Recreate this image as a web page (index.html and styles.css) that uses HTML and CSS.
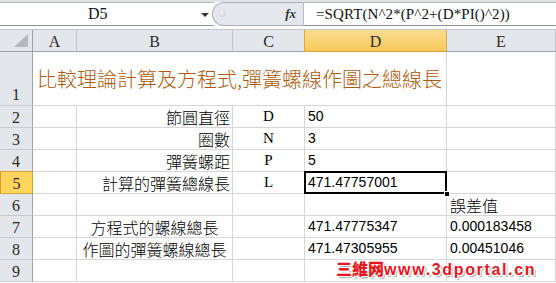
FILE: index.html
```html
<!DOCTYPE html>
<html lang="zh-Hant">
<head>
<meta charset="utf-8">
<title>Sheet</title>
<link rel="stylesheet" href="styles.css">
</head>
<body>
<div class="app">
  <div class="fbar">
    <div class="namebox"><span class="ref">D5</span><span class="caret"></span></div>
    <div class="fxzone"><span class="knob"></span><span class="fx">fx</span></div>
    <div class="formula">=SQRT(N^2*(P^2+(D*PI()^2))</div>
  </div>
  <div class="sheet">
    <div class="corner"><span class="tri"></span></div>
    <div class="ch">A</div>
    <div class="ch">B</div>
    <div class="ch">C</div>
    <div class="ch ch-on">D</div>
    <div class="ch">E</div>

    <div class="rh rh-tall">1</div>
    <div class="c title">比較理論計算及方程式,彈簧螺線作圖之總線長</div>
    <div class="c"></div>

    <div class="rh">2</div>
    <div class="c"></div>
    <div class="c right cjk">節圓直徑</div>
    <div class="c mid ser">D</div>
    <div class="c num">50</div>
    <div class="c"></div>

    <div class="rh">3</div>
    <div class="c"></div>
    <div class="c right cjk">圈數</div>
    <div class="c mid ser">N</div>
    <div class="c num">3</div>
    <div class="c"></div>

    <div class="rh">4</div>
    <div class="c"></div>
    <div class="c right cjk">彈簧螺距</div>
    <div class="c mid ser">P</div>
    <div class="c num">5</div>
    <div class="c"></div>

    <div class="rh rh-on">5</div>
    <div class="c"></div>
    <div class="c right cjk">計算的彈簧總線長</div>
    <div class="c mid ser">L</div>
    <div class="c num sel">471.47757001<span class="handle"></span></div>
    <div class="c"></div>

    <div class="rh">6</div>
    <div class="c"></div>
    <div class="c"></div>
    <div class="c"></div>
    <div class="c"></div>
    <div class="c cjk">誤差值</div>

    <div class="rh">7</div>
    <div class="c"></div>
    <div class="c center cjk">方程式的螺線總長</div>
    <div class="c"></div>
    <div class="c num">471.47775347</div>
    <div class="c num">0.000183458</div>

    <div class="rh">8</div>
    <div class="c"></div>
    <div class="c center cjk">作圖的彈簧螺線總長</div>
    <div class="c"></div>
    <div class="c num">471.47305955</div>
    <div class="c num">0.00451046</div>

    <div class="rh">9</div>
    <div class="c"></div>
    <div class="c"></div>
    <div class="c"></div>
    <div class="c"></div>
    <div class="c"></div>
  </div>
  <div class="wm"><span class="wm-cjk">三維网</span>www.3dportal.cn</div>
</div>
</body>
</html>
```

FILE: styles.css
```css
* { box-sizing: border-box; }
html, body { margin: 0; padding: 0; background: #ffffff; }
body { font-family: "Liberation Sans", "Noto Sans CJK TC", sans-serif; color: #000; }

.app { position: relative; width: 556px; height: 283px; overflow: hidden; background: #fff; }

/* formula bar */
.fbar {
  height: 30px;
  display: flex;
  align-items: flex-start;
  padding-top: 2px;
  background: linear-gradient(#dfe3e8 0, #dfe3e8 2px, #ffffff 2px);
  border-bottom: 1px solid #c4c8ce;
}
.namebox {
  width: 214px;
  height: 24px;
  background: #fff;
  border-top: 1px solid #b7bcc3;
  border-bottom: 1px solid #8e949b;
  display: flex;
  align-items: center;
  position: relative;
}
.ref {
  font-family: "Liberation Serif", serif;
  font-size: 16px;
  margin-left: 88px;
  color: #111;
}
.caret {
  position: absolute;
  left: 201px;
  top: 10px;
  width: 0; height: 0;
  border-left: 4px solid transparent;
  border-right: 4px solid transparent;
  border-top: 4px solid #333;
}
.fxzone {
  width: 92px;
  height: 24px;
  margin-left: -2px;
  background: #e4e7ec;
  border: 1px solid #a9afb7;
  border-right: 1px solid #b6bcc4;
  border-radius: 12px 0 0 12px;
  display: flex;
  align-items: center;
  position: relative;
}
.knob {
  position: absolute;
  left: 6px; top: 7px;
  width: 7px; height: 7px;
  border-radius: 50%;
  background: radial-gradient(circle at 40% 40%, #f4f5f7, #c3c7cd);
}
.fx {
  margin-left: auto;
  margin-right: 7px;
  font-family: "Liberation Serif", serif;
  font-style: italic;
  font-weight: bold;
  font-size: 13px;
  color: #333;
}
.formula {
  flex: 1;
  height: 24px;
  background: #fff;
  border-top: 1px solid #b7bcc3;
  border-bottom: 1px solid #8e949b;
  font-family: "Liberation Serif", serif;
  font-size: 15px;
  letter-spacing: 0.1px;
  padding-left: 12px;
  display: flex;
  align-items: center;
  color: #111;
}

/* sheet */
.sheet {
  display: grid;
  grid-template-columns: 33px 44px 156px 72px 142px 109px;
  grid-template-rows: 22px 54px repeat(8, 22px);
}
.corner, .ch, .rh {
  background: #e3e6eb;
  font-family: "Liberation Serif", serif;
  font-size: 16px;
  color: #2a2a2a;
  display: flex;
  align-items: center;
  justify-content: center;
}
.corner { border-right: 1px solid #9ea4ab; border-bottom: 1px solid #9ea4ab; position: relative; }
.tri {
  position: absolute;
  right: 4px; bottom: 4px;
  width: 14px; height: 13px;
  background: #b5b9bf;
  clip-path: polygon(100% 0, 100% 100%, 0 100%);
}
.ch { border-right: 1px solid #c2c6cc; border-bottom: 1px solid #9ea4ab; padding-top: 2px; }
.ch-on {
  background: linear-gradient(#fbdc8f, #f6c95c);
  border-right: 1px solid #e0a93f;
  border-left: 1px solid #e0a93f;
  border-bottom: 1px solid #e2a23a;
  margin-left: -1px;
}
.rh { border-right: 1px solid #9ea4ab; border-bottom: 1px solid #c8ccd2; padding-top: 3px; }
.rh-tall { align-items: flex-end; padding-bottom: 1px; }
.rh-on { background: #ffd55e; border: 1px solid #d9a02f; margin-top: -1px; }

.c {
  border-right: 1px solid #d6d6d6;
  border-bottom: 1px solid #d6d6d6;
  display: flex;
  align-items: flex-end;
  padding: 0 3px 2px 3px;
  white-space: nowrap;
  font-size: 14px;
  line-height: 17px;
  position: relative;
}
.title {
  grid-column: span 4;
  align-items: center;
  padding: 0 0 0 4px;
  font-family: "Noto Sans CJK TC", sans-serif;
  font-weight: 300;
  font-size: 20px;
  line-height: 24px;
  color: #b0590a;
}
.cjk { font-family: "Noto Sans CJK TC", sans-serif; font-weight: 300; font-size: 16px; line-height: 18px; padding-bottom: 1px; }
.right { justify-content: flex-end; padding-right: 2px; }
.center { justify-content: center; }
.mid { justify-content: center; }
.ser { font-family: "Liberation Serif", serif; font-size: 15px; }
.num { font-family: "Liberation Sans", sans-serif; font-size: 14px; }

.sel::after {
  content: "";
  position: absolute;
  left: -1px; top: -1px; right: -1px; bottom: -1px;
  border: 2px solid #000;
}
.handle {
  position: absolute;
  right: -4px; bottom: -4px;
  width: 6px; height: 6px;
  background: #000;
  border: 1px solid #fff;
  z-index: 2;
}

/* watermark overlay */
.wm {
  position: absolute;
  left: 336px;
  top: 259px;
  font-family: "Liberation Sans", "Noto Sans CJK SC", sans-serif;
  font-weight: 900;
  font-size: 16px;
  line-height: 18px;
  letter-spacing: 1.65px;
  color: #e8161e;
  text-shadow:
    1px 0 0 #fff, -1px 0 0 #fff, 0 1px 0 #fff, 0 -1px 0 #fff,
    1px 1px 0 #fff, -1px -1px 0 #fff, 1px -1px 0 #fff, -1px 1px 0 #fff,
    2px 2px 1px rgba(0,0,0,0.35);
  white-space: nowrap;
}
.wm-cjk { font-family: "Noto Sans CJK SC", sans-serif; font-weight: 900; letter-spacing: 0; }
```
